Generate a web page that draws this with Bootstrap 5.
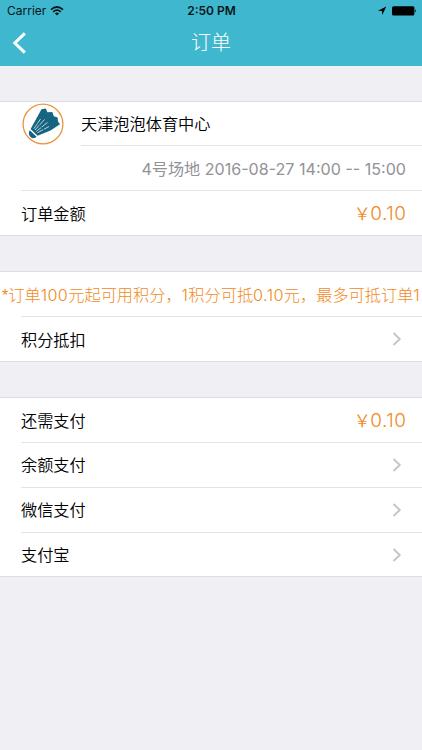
<!DOCTYPE html>
<html lang="zh-CN">
<head>
<meta charset="utf-8">
<meta name="viewport" content="width=device-width, initial-scale=1">
<title>订单</title>
<link href="https://cdn.jsdelivr.net/npm/bootstrap@5.3.0/dist/css/bootstrap.min.css" rel="stylesheet">
<style>
body{background:#efeff4;font-family:Inter,"Noto Sans CJK SC",sans-serif;font-size:16.2px;font-weight:350;color:#000;overflow:hidden}
.top-area{background:#3fb7ce;height:66px}
.status-line{height:22px;font-size:12px;font-weight:400;padding:0 6px 0 7px;color:#08161a}
.status-line>div{flex:1 1 0}
.title-line{height:42px;padding:0 12px}
.title-line>*{flex:1 1 0}
.page-title{font-size:20px;font-weight:300;text-align:center;color:#fff;line-height:40px}
.group{background:#fff;border-top:1px solid #dddde1;border-bottom:1px solid #dddde1;padding-left:21px;margin-top:35px}
.line{height:45px;padding-right:16px;line-height:24px}
.line:first-child{height:44px}
.g1 .line:first-child{height:43px}
.g3 .line:last-child{height:44px}
.g1 .line:last-child,.g2 .line:last-child,.g3 .line:first-child{padding-top:2px}
.line+.line{border-top:1px solid #e4e4e6}
.arrow{margin-right:4px}
.g2 .arrow{margin-top:-2px}
.club{padding-left:60px}
.club+.line{border-top-color:transparent;background:linear-gradient(#e4e4e6,#e4e4e6) 60px 0/100% 1px no-repeat border-box}
.pic{left:1px;top:1px}
.muted{color:#929297;font-size:16.1px;font-weight:400;padding-top:2px}
.money{color:#f08a24;font-size:19px;font-weight:300;letter-spacing:.5px;margin-right:-.5px}
.yen{margin-right:-1px;font-size:17px;font-weight:350}
.note{color:#f08a24;font-size:16.2px;font-weight:300;margin-left:-19px;padding:2px 0 0;white-space:nowrap;overflow:hidden}
.num{letter-spacing:.4px}
.star{font-family:"Liberation Sans",sans-serif}
</style>
<script src="https://cdn.jsdelivr.net/npm/bootstrap@5.3.0/dist/js/bootstrap.bundle.min.js"></script>
</head>
<body>
<header class="top-area">
  <div class="status-line d-flex align-items-center">
    <div class="d-flex align-items-center gap-1"><span>Carrier</span>
      <svg width="14" height="10" viewBox="0 0 14 10" fill="none" stroke="#08161a" stroke-width="1.7"><path d="M1 3.6Q7-1.6 13 3.6M3.2 5.8Q7 2.5 10.8 5.8"/><path d="M7 9.6 4.9 7.4Q7 5.8 9.1 7.4Z" fill="#08161a" stroke="none"/></svg>
    </div>
    <span class="fw-semibold">2:50 PM</span>
    <div class="d-flex align-items-center justify-content-end">
      <svg width="38" height="10" viewBox="0 0 38 10"><path d="M8.3.6 0 4.8l4 .2.3 4Z"/><rect x="14" y=".2" width="22.4" height="9.4" rx="1.6"/><path d="M37 3.3q1.5 1.6 0 3.2Z"/></svg>
    </div>
  </div>
  <div class="title-line d-flex align-items-center">
    <a href="#" aria-label="返回" class="d-flex"><svg width="15" height="22" viewBox="0 0 15 22" fill="none" stroke="#fff" stroke-width="3"><path d="M12.8 1.3 2.8 11l10 9.7"/></svg></a>
    <h1 class="page-title m-0">订单</h1>
    <span></span>
  </div>
</header>
<main>
  <section class="group g1">
    <div class="line club position-relative d-flex align-items-center">
      <svg class="pic position-absolute" width="42" height="42" viewBox="0 0 42 42"><circle cx="21" cy="21" r="19.9" fill="#fff" stroke="#e9953f" stroke-width="1.3"/><path fill="#156480" d="M19.5 6.2 23.8 5.6 25.4 9.2 30.3 9 31.8 13.2 35.6 14.5 36 18.5 38 21.3 28.5 27.6 15.6 32.8 8.6 26Z"/><path fill="#156480" d="m7.8 27.2 6.8 6.6c-1.6 1.6-4.2 2-6.1.1-2-2-2.2-4.9-.7-6.7Z"/><path d="M11.8 25.8 18.5 16M13 27 22.5 16.5M14.2 28.4 25.5 19.5M15.4 29.8 27 23.5" fill="none" stroke="#fff" stroke-width=".7"/><path d="m15.8 20.5 7.5 7.6" fill="none" stroke="#156480"/></svg>
      <span>天津泡泡体育中心</span>
    </div>
    <div class="line muted d-flex align-items-center justify-content-end">4号场地 2016-08-27 14:00 -- 15:00</div>
    <div class="line d-flex align-items-center justify-content-between"><span>订单金额</span><span class="money"><span class="yen">￥</span>0.10</span></div>
  </section>
  <section class="group g2">
    <div class="line note d-flex align-items-center"><span><span class="star">*</span>订单<span class="num">100</span>元起可用积分，<span class="num">1</span>积分可抵<span class="num">0.10</span>元，最多可抵订单1</span></div>
    <div class="line d-flex align-items-center justify-content-between"><span>积分抵扣</span><svg class="arrow" width="10" height="14" viewBox="0 0 10 14" fill="none" stroke="#c3c3c8" stroke-width="1.8"><path d="m1.5 1 6.3 6-6.3 6"/></svg></div>
  </section>
  <section class="group g3">
    <div class="line d-flex align-items-center justify-content-between"><span>还需支付</span><span class="money"><span class="yen">￥</span>0.10</span></div>
    <div class="line d-flex align-items-center justify-content-between"><span>余额支付</span><svg class="arrow" width="10" height="14" viewBox="0 0 10 14" fill="none" stroke="#c3c3c8" stroke-width="1.8"><path d="m1.5 1 6.3 6-6.3 6"/></svg></div>
    <div class="line d-flex align-items-center justify-content-between"><span>微信支付</span><svg class="arrow" width="10" height="14" viewBox="0 0 10 14" fill="none" stroke="#c3c3c8" stroke-width="1.8"><path d="m1.5 1 6.3 6-6.3 6"/></svg></div>
    <div class="line d-flex align-items-center justify-content-between"><span>支付宝</span><svg class="arrow" width="10" height="14" viewBox="0 0 10 14" fill="none" stroke="#c3c3c8" stroke-width="1.8"><path d="m1.5 1 6.3 6-6.3 6"/></svg></div>
  </section>
</main>
</body>
</html>
